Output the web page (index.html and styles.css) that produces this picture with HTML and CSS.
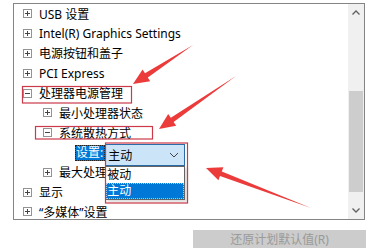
FILE: index.html
```html
<!DOCTYPE html>
<html>
    <head>
        <meta charset="utf-8">
        <title>电源选项 - 高级设置</title>
        <link rel="stylesheet" href="styles.css">
    </head>
    <body>
        <div class="pagina">
            <div class="painel">
                <div class="arvore">
                    <div class="linha nivel1"><svg class="caixa" width="9" height="9"><rect x=".5" y=".5" width="8" height="8" fill="#fff" stroke="#939393"/><path d="M2 4.5h5M4.5 2v5" stroke="#444"/></svg>USB 设置</div>
                    <div class="linha nivel1"><svg class="caixa" width="9" height="9"><rect x=".5" y=".5" width="8" height="8" fill="#fff" stroke="#939393"/><path d="M2 4.5h5M4.5 2v5" stroke="#444"/></svg>Intel(R) Graphics Settings</div>
                    <div class="linha nivel1"><svg class="caixa" width="9" height="9"><rect x=".5" y=".5" width="8" height="8" fill="#fff" stroke="#939393"/><path d="M2 4.5h5M4.5 2v5" stroke="#444"/></svg>电源按钮和盖子</div>
                    <div class="linha nivel1"><svg class="caixa" width="9" height="9"><rect x=".5" y=".5" width="8" height="8" fill="#fff" stroke="#939393"/><path d="M2 4.5h5M4.5 2v5" stroke="#444"/></svg>PCI Express</div>
                    <div class="linha nivel1"><svg class="caixa" width="9" height="9"><rect x=".5" y=".5" width="8" height="8" fill="#fff" stroke="#939393"/><path d="M2 4.5h5" stroke="#444"/></svg>处理器电源管理</div>
                    <div class="linha nivel2"><svg class="caixa" width="9" height="9"><rect x=".5" y=".5" width="8" height="8" fill="#fff" stroke="#939393"/><path d="M2 4.5h5M4.5 2v5" stroke="#444"/></svg>最小处理器状态</div>
                    <div class="linha nivel2"><svg class="caixa" width="9" height="9"><rect x=".5" y=".5" width="8" height="8" fill="#fff" stroke="#939393"/><path d="M2 4.5h5" stroke="#444"/></svg>系统散热方式</div>
                    <div class="linha nivel3">
                        <span class="rotulo">设置:</span>
                        <div class="seletor">
                            <span>主动</span>
                            <svg width="10" height="6"><path d="M1 1l4 4 4-4" fill="none" stroke="#444" stroke-width="1"/></svg>
                            <div class="lista">
                                <div class="opcao">被动</div>
                                <div class="opcao escolhida">主动</div>
                            </div>
                        </div>
                    </div>
                    <div class="linha nivel2"><svg class="caixa" width="9" height="9"><rect x=".5" y=".5" width="8" height="8" fill="#fff" stroke="#939393"/><path d="M2 4.5h5M4.5 2v5" stroke="#444"/></svg>最大处理</div>
                    <div class="linha nivel1"><svg class="caixa" width="9" height="9"><rect x=".5" y=".5" width="8" height="8" fill="#fff" stroke="#939393"/><path d="M2 4.5h5M4.5 2v5" stroke="#444"/></svg>显示</div>
                    <div class="linha nivel1"><svg class="caixa" width="9" height="9"><rect x=".5" y=".5" width="8" height="8" fill="#fff" stroke="#939393"/><path d="M2 4.5h5M4.5 2v5" stroke="#444"/></svg>“多媒体”设置</div>
                </div>
                <div class="rolagem">
                    <div class="seta"><svg width="8" height="5"><path d="M.5 4.5l3.5-3.5 3.5 3.5" fill="none" stroke="#606060" stroke-width="1.3"/></svg></div>
                    <div class="trilho"><div class="polegar"></div></div>
                    <div class="seta"><svg width="8" height="5"><path d="M.5 .5l3.5 3.5 3.5-3.5" fill="none" stroke="#606060" stroke-width="1.3"/></svg></div>
                </div>
            </div>
            <button class="restaurar">还原计划默认值(R)</button>
        </div>
        <svg class="marcas" width="377" height="248">
            <rect x="22.5" y="86.5" width="109" height="16.5" fill="none" stroke="#cc3a4a" stroke-width="1.2"/>
            <rect x="35.5" y="126.5" width="117" height="12.5" fill="none" stroke="#cc3a4a" stroke-width="1.2"/>
            <rect x="105.5" y="143" width="82" height="60" fill="none" stroke="#cc3a4a" stroke-width="1.2"/>
            <polygon points="193,45 147.8,77.4 150.2,81.2 133,84 142.6,69.4 145,73.2" fill="#ec3b3b"/>
            <polygon points="236,76 173.6,122 176.2,125.7 159,129 168.2,114.1 170.8,117.8" fill="#ec3b3b"/>
            <polygon points="311,208 221.8,171.4 223.4,167.2 206,168 218.4,180.2 220,176" fill="#ec3b3b"/>
        </svg>
    </body>
</html>
```

FILE: styles.css
```css
body {
    margin: 0;
    background-color: white;
    font-family: "Noto Sans", "Noto Sans CJK SC", sans-serif;
    font-size: 12px;
    color: black;
}
.pagina {
    padding: 3px 0 0 13px;
}
.painel {
    width: 350px;
    height: 215px;
    border: 1px solid #848484;
    display: flex;
    overflow: hidden;
}
.arvore {
    flex: 1;
    position: relative;
}
.linha {
    height: 19.8px;
    display: flex;
    align-items: center;
    white-space: nowrap;
}
.caixa {
    margin-right: 7px;
    flex-shrink: 0;
}
.nivel1 {
    padding-left: 9px;
}
.nivel2 {
    padding-left: 29px;
}
.nivel3 {
    padding-left: 61px;
    align-items: flex-start;
}
.rotulo {
    margin-top: 2.4px;
    height: 16px;
    line-height: 16px;
    padding: 0 2px 0 1px;
    background-color: #0078d7;
    color: white;
    outline: 1px dotted #222;
    outline-offset: -1px;
}
.seletor {
    margin-top: 1.4px;
    width: 71px;
    height: 20px;
    border: 1px solid #2b6ca8;
    background-color: #cce4f7;
    display: flex;
    align-items: center;
    justify-content: space-between;
    padding: 0 5px 0 2px;
    position: relative;
}
.lista {
    position: absolute;
    top: 21px;
    left: -1px;
    right: -1px;
    border: 1px solid #646464;
    background-color: white;
    box-shadow: 2px 2px 3px rgba(0, 0, 0, 0.15);
}
.opcao {
    height: 16px;
    line-height: 16px;
    padding-left: 1px;
}
.escolhida {
    background-color: #0078d7;
    color: white;
    outline: 1px dotted #bcd;
    outline-offset: -1px;
}
.rolagem {
    width: 16px;
    background-color: #f0f0f0;
    display: flex;
    flex-direction: column;
}
.seta {
    height: 17px;
    display: flex;
    align-items: center;
    justify-content: center;
}
.trilho {
    flex: 1;
    padding: 70px 1px 10px 1px;
    display: flex;
}
.polegar {
    flex: 1;
    background-color: #cdcdcd;
}
.restaurar {
    display: block;
    margin: 10px 0 0 180px;
    width: 173px;
    height: 19px;
    line-height: 19px;
    border: none;
    background-color: #cccccc;
    color: #9a9a9a;
    font-family: "Noto Sans", "Noto Sans CJK SC", sans-serif;
    font-size: 12px;
    padding: 0;
}
.marcas {
    position: absolute;
    top: 0;
    left: 0;
    pointer-events: none;
}
```
